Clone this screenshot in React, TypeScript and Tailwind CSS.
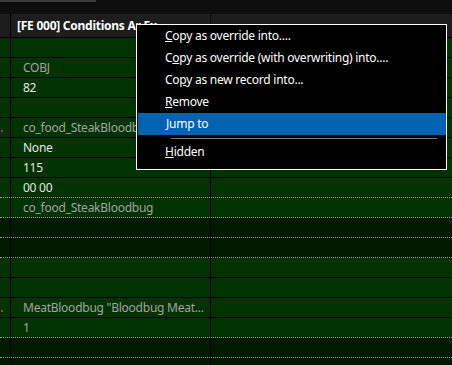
import React from "react";

type Row = {
  text?: string;
  tone?: "grey" | "white";
  bg: "bright" | "dark";
  line: "solid" | "dotted";
  mark?: string;
};

const rows: Row[] = [
  { bg: "bright", line: "solid" },
  { text: "COBJ", tone: "grey", bg: "bright", line: "solid" },
  { text: "82", tone: "white", bg: "bright", line: "solid" },
  { bg: "bright", line: "solid" },
  { text: "co_food_SteakBloodbug", tone: "grey", bg: "bright", line: "solid", mark: "bg-[#a020b0]" },
  { text: "None", tone: "white", bg: "bright", line: "solid" },
  { text: "115", tone: "white", bg: "bright", line: "solid" },
  { text: "00 00", tone: "white", bg: "bright", line: "dotted" },
  { text: "co_food_SteakBloodbug", tone: "grey", bg: "bright", line: "dotted" },
  { bg: "dark", line: "dotted" },
  { bg: "dark", line: "dotted" },
  { bg: "bright", line: "solid" },
  { bg: "bright", line: "solid" },
  { text: 'MeatBloodbug "Bloodbug Meat...', tone: "grey", bg: "bright", line: "solid", mark: "bg-[#c03a10]" },
  { text: "1", tone: "grey", bg: "bright", line: "dotted" },
  { bg: "dark", line: "dotted" },
  { bg: "dark", line: "dotted" },
];

function GridRow({ r }: { r: Row }) {
  const bg = r.bg === "bright" ? "bg-[#003300]" : "bg-[#001a00]";
  const border =
    r.line === "solid"
      ? "border-b border-solid border-b-black"
      : "border-b border-dotted border-b-[#9a9a9a]";
  const tone = r.tone === "white" ? "text-[#e6e6e6]" : "text-[#a3a3a3]";
  return (
    <div className={`flex h-[20px] shrink-0 ${bg} ${border}`}>
      <div className="relative w-[11px] shrink-0 border-r border-r-black">
        {r.mark && <span className={`absolute left-[1px] top-[12px] h-[2px] w-[2px] ${r.mark}`} />}
      </div>
      <div className={`flex w-[200px] shrink-0 items-center border-r border-r-black pl-[12px] text-[12px] leading-none ${tone}`}>
        <span className="whitespace-nowrap">{r.text}</span>
      </div>
      <div className="flex-1" />
    </div>
  );
}

function Item({ children, active }: { children: React.ReactNode; active?: boolean }) {
  return (
    <div
      className={`flex h-[22px] items-center pl-[28px] text-[12px] text-white ${
        active ? "ml-[1px] bg-[#0063b1]" : ""
      }`}
    >
      <span className="whitespace-nowrap">{children}</span>
    </div>
  );
}

export default function App() {
  return (
    <div
      className="relative h-[365px] w-[452px] overflow-hidden bg-[#001a00] tracking-[-0.25px]"
      style={{ fontFamily: '"Noto Sans", "Open Sans", sans-serif' }}
    >
      <div className="relative h-[14px] bg-[#0e0e0e]">
        <div className="h-[2px] w-[96px] bg-[#3c3c3c]" />
      </div>
      <div className="flex h-[24px] border-b border-b-black bg-[#1d1d1d]">
        <div className="w-[11px] shrink-0 border-r border-r-black" />
        <div className="flex w-[200px] shrink-0 items-center border-r border-r-[#0c0c0c] pl-[6px] text-[12px] font-bold text-white">
          <span className="whitespace-nowrap">[FE 000] Conditions Ar Ex</span>
        </div>
        <div className="flex-1" />
      </div>
      {rows.map((r, i) => (
        <GridRow key={i} r={r} />
      ))}

      <div className="absolute left-[136px] top-[24px] flex h-[146px] w-[311px] flex-col border border-white bg-black">
        <Item>
          <u>C</u>opy as override into....
        </Item>
        <Item>
          C<u>o</u>py as override (with overwriting) into....
        </Item>
        <Item>
          Co<u>p</u>y as new record into...
        </Item>
        <Item>
          <u>R</u>emove
        </Item>
        <Item active>
          <u>J</u>ump to
        </Item>
        <div className="flex h-[6px] items-center">
          <div className="ml-[34px] mr-[9px] h-[1px] flex-1 bg-[#7a7a7a]" />
        </div>
        <Item>
          <u>H</u>idden
        </Item>
      </div>
    </div>
  );
}
